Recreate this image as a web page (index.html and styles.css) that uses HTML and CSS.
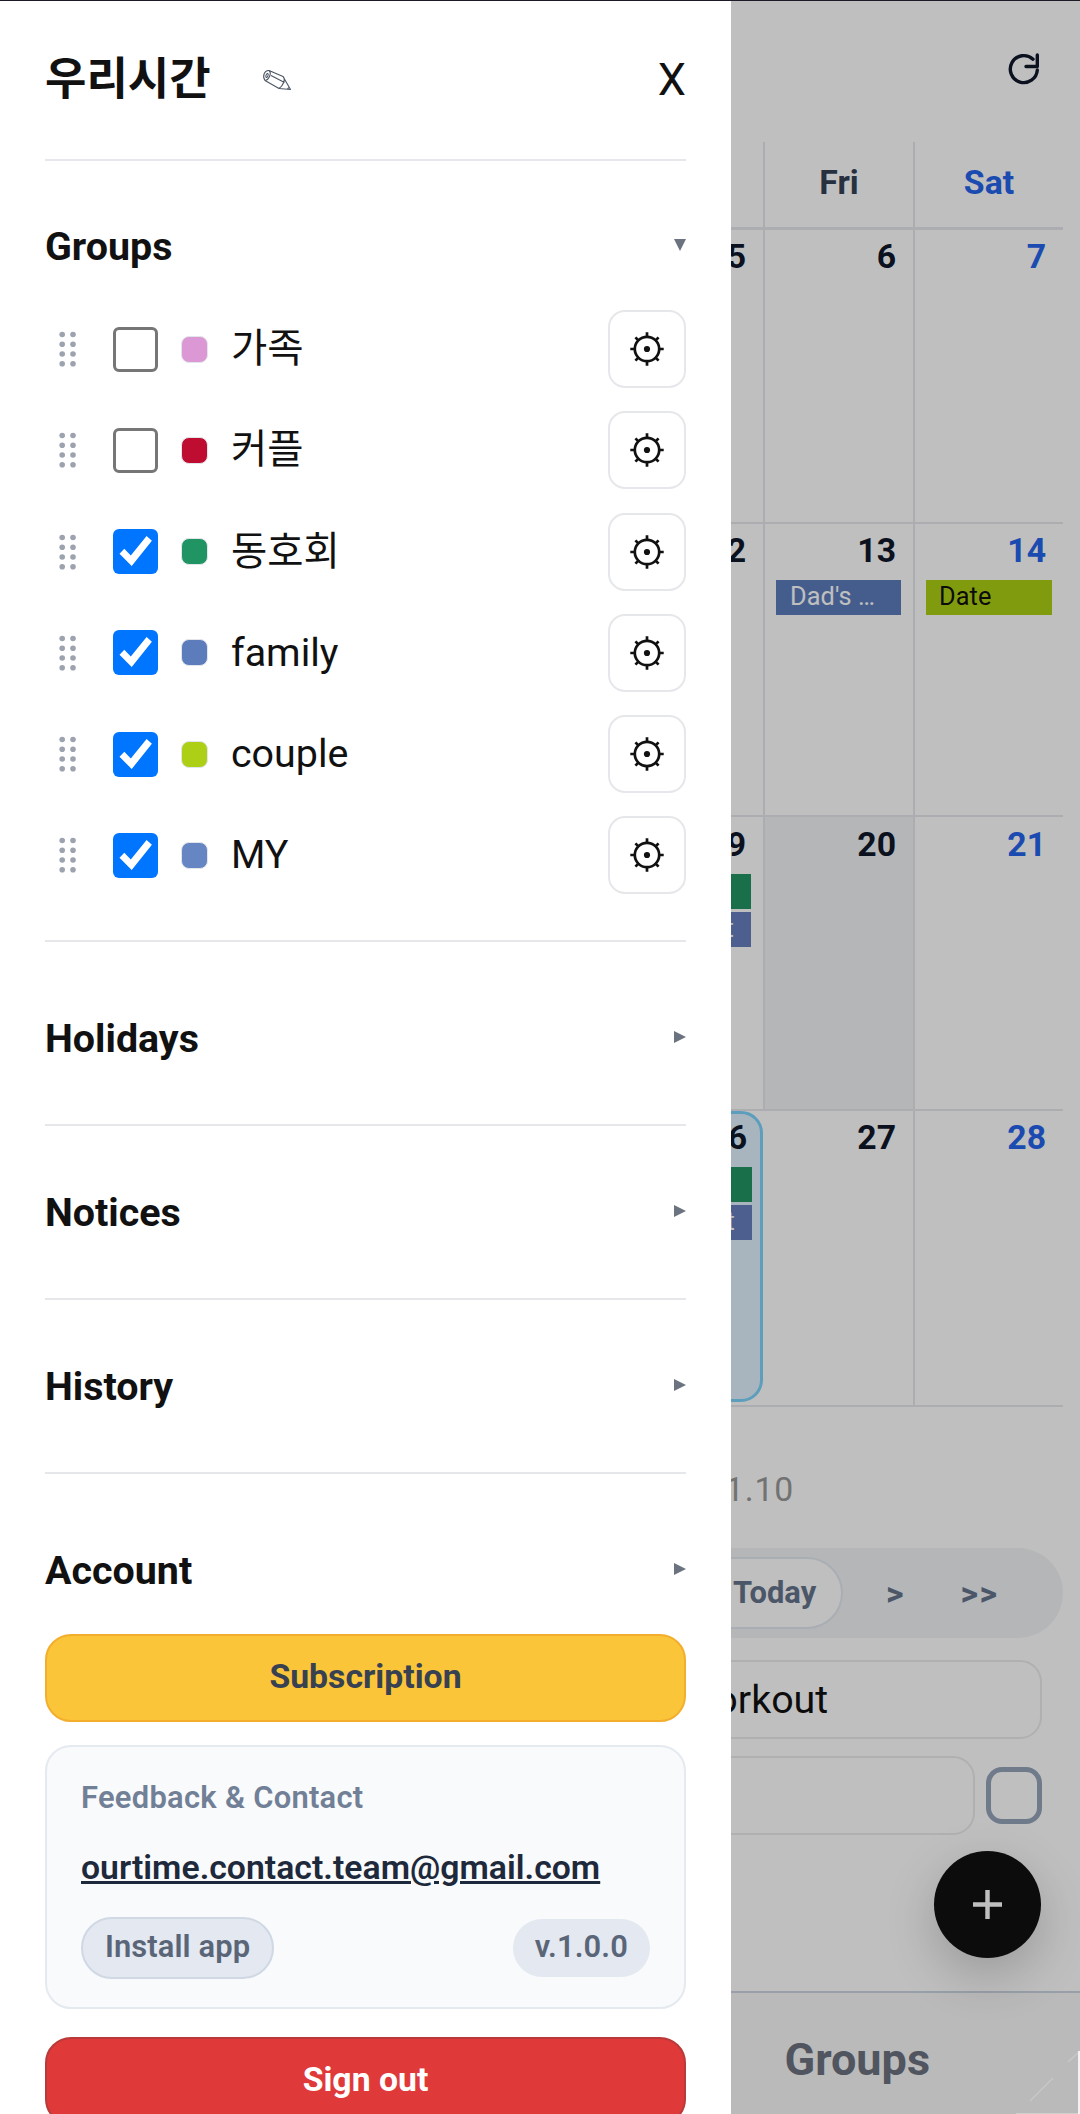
FILE: index.html
```html
<!DOCTYPE html>
<html lang="ko">
<head>
<meta charset="utf-8">
<title>우리시간</title>
<link rel="stylesheet" href="styles.css">
</head>
<body>
<svg class="defs" width="0" height="0" aria-hidden="true">
  <symbol id="gear" viewBox="0 0 34 34">
    <circle cx="17" cy="17" r="12.2" fill="none" stroke="#111" stroke-width="2.7"/>
    <circle cx="17" cy="17" r="3.1" fill="#111"/>
    <path d="M17 .3v5M17 28.700v5M.3 17h5M28.700 17h5M5.400 5.400l3.400 3.400M25.200 25.200l3.400 3.400M5.400 28.600l3.400-3.400M25.200 8.800l3.400-3.400" stroke="#111" stroke-width="2.7" fill="none"/>
  </symbol>
  <symbol id="grip" viewBox="0 0 18 36">
    <g fill="#9ca3af"><circle cx="3.200" cy="3.500" r="2.800"/><circle cx="14" cy="3.500" r="2.800"/><circle cx="3.200" cy="13.200" r="2.800"/><circle cx="14" cy="13.200" r="2.800"/><circle cx="3.200" cy="23" r="2.800"/><circle cx="14" cy="23" r="2.800"/><circle cx="3.200" cy="32.700" r="2.800"/><circle cx="14" cy="32.700" r="2.800"/></g>
  </symbol>
  <symbol id="tick" viewBox="0 0 45 45">
    <path d="M6.500 24.800l4.800-5 6.500 6.700L33.600 7l5.300 4.700L18.700 37z" fill="#fff"/>
  </symbol>
</svg>

<main class="app">
  <header class="topbar">
    <svg class="refresh" viewBox="0 0 32 32" fill="none" stroke="#0f172a" stroke-width="3.400" stroke-linecap="round" stroke-linejoin="round"><path d="M29.300 17A13.500 13.500 0 1 1 25 6.200"/><path d="M29.300 2v11.500H18"/></svg>
  </header>
  <section class="calendar">
    <div class="head"></div><div class="head">Fri</div><div class="head sat">Sat</div>
    <div class="day"><b>5</b></div>
    <div class="day"><b>6</b></div>
    <div class="day sat"><b>7</b></div>
    <div class="day"><b>12</b></div>
    <div class="day"><b>13</b><span class="event blue">Dad's …</span></div>
    <div class="day sat"><b>14</b><span class="event lime">Date</span></div>
    <div class="day"><b>19</b><span class="event green"></span><span class="event indigo end">t</span></div>
    <div class="day today"><b>20</b></div>
    <div class="day sat"><b>21</b></div>
    <div class="day selected"><b>26</b><span class="event green"></span><span class="event indigo end">t</span></div>
    <div class="day"><b>27</b></div>
    <div class="day sat"><b>28</b></div>
  </section>
  <p class="lunar">1.10</p>
  <nav class="pager"><span class="now">Today</span><span class="next">&gt;</span><span class="last">&gt;&gt;</span></nav>
  <section class="agenda">
    <div class="item">Workout</div>
    <div class="todo"><div class="item"></div><i class="box"></i></div>
  </section>
  <footer class="tabs"><span>Groups</span></footer>
  <div class="fab"><svg viewBox="0 0 30 30"><path d="M15 0v30M0 15h30" stroke="#fff" stroke-width="4.600"/></svg></div>
</main>
<div class="scrim"></div>
<svg class="corner" viewBox="0 0 80 80" fill="none"><path d="M30 67L53 44M68 28l12-11" stroke="#fff" stroke-opacity=".2" stroke-width="1.500"/><path d="M79 17v63" stroke="#f2f2f2" stroke-width="2"/><path d="M16 79.500h64" stroke="#fff" stroke-opacity=".3"/></svg>

<aside class="drawer">
  <header class="brand">
    <h1>우리시간</h1>
    <svg class="pencil" viewBox="0 0 30 24" fill="none" stroke="#4b5563" stroke-width="1.100" stroke-linejoin="round"><path d="M7 1.500L21 7.500L28.500 20.500L17 19.500L3 11.500C0 7 2.500 1 7 1.500ZM7 1.500C10 4 7 11 3 11.500M9 6.500L22.500 13.500M21 7.500C24 10 21 17 17 19.500M25.500 20l2-2"/><ellipse cx="5" cy="6.500" rx="1" ry="2" transform="rotate(20 5 6.500)"/></svg>
    <span class="close">X</span>
  </header>
  <section class="groups">
    <h2>Groups<svg class="caret" viewBox="0 0 12 12"><path d="M0 0h12L6 12z"/></svg></h2>
    <ul>
      <li><svg class="grip"><use href="#grip"/></svg><i class="check"></i><i class="swatch pink"></i><span>가족</span><button><svg><use href="#gear"/></svg></button></li>
      <li><svg class="grip"><use href="#grip"/></svg><i class="check"></i><i class="swatch red"></i><span>커플</span><button><svg><use href="#gear"/></svg></button></li>
      <li><svg class="grip"><use href="#grip"/></svg><i class="check on"><svg><use href="#tick"/></svg></i><i class="swatch green"></i><span>동호회</span><button><svg><use href="#gear"/></svg></button></li>
      <li><svg class="grip"><use href="#grip"/></svg><i class="check on"><svg><use href="#tick"/></svg></i><i class="swatch blue"></i><span>family</span><button><svg><use href="#gear"/></svg></button></li>
      <li><svg class="grip"><use href="#grip"/></svg><i class="check on"><svg><use href="#tick"/></svg></i><i class="swatch lime"></i><span>couple</span><button><svg><use href="#gear"/></svg></button></li>
      <li><svg class="grip"><use href="#grip"/></svg><i class="check on"><svg><use href="#tick"/></svg></i><i class="swatch steel"></i><span>MY</span><button><svg><use href="#gear"/></svg></button></li>
    </ul>
  </section>
  <section class="fold first"><h2>Holidays<svg class="caret" viewBox="0 0 12 12"><path d="M0 0v12L12 6z"/></svg></h2></section>
  <section class="fold"><h2>Notices<svg class="caret" viewBox="0 0 12 12"><path d="M0 0v12L12 6z"/></svg></h2></section>
  <section class="fold"><h2>History<svg class="caret" viewBox="0 0 12 12"><path d="M0 0v12L12 6z"/></svg></h2></section>
  <section class="account">
    <h2>Account<svg class="caret" viewBox="0 0 12 12"><path d="M0 0v12L12 6z"/></svg></h2>
    <div class="wide subscribe">Subscription</div>
    <div class="contact">
      <p>Feedback &amp; Contact</p>
      <a>ourtime.contact.team@gmail.com</a>
      <div class="meta"><span class="pill install">Install app</span><span class="pill">v.1.0.0</span></div>
    </div>
    <div class="wide signout">Sign out</div>
  </section>
</aside>
</body>
</html>
```
FILE: styles.css
```css
* { box-sizing: border-box; margin: 0; padding: 0; }
body { position: relative; width: 1080px; height: 2114px; overflow: hidden; background: #fff; color: #111; font-family: Roboto, "Noto Sans CJK KR", sans-serif; }
i { font-style: normal; }
ul { list-style: none; }
svg { display: block; }
.defs { position: absolute; }

/* calendar page */
.app { display: flex; flex-direction: column; align-items: flex-end; height: 2114px; border-top: 1px solid #1c1a26; }
.topbar { height: 141px; padding: 52px 40px 0 0; }
.refresh { width: 32px; height: 32px; }
.calendar { display: grid; grid-template-columns: 150px 150px 148px; grid-template-rows: 88px 294px 293px 294px 294px; margin-right: 17px; border-bottom: 2px solid #e5e7eb; color: #0f172a; }
.head { border-right: 2px solid #e5e7eb; border-bottom: 3px solid #e5e7eb; text-align: center; font: 700 33.750px/82px Roboto; color: #334155; }
.day { display: flex; flex-direction: column; gap: 3px; border-right: 2px solid #e5e7eb; border-bottom: 2px solid #e5e7eb; padding: 7px 12px 0 11px; }
.day b { font: 700 33.750px/40px Roboto; text-align: right; padding-right: 5px; margin-bottom: 6px; }
.day.sat { padding-right: 11px; }
.day.sat b { padding-right: 6px; }
.day:nth-child(n+13) { border-bottom: 0; }
.day:nth-child(n+10) { padding-top: 8px; }
.day:nth-child(n+13) { padding-top: 7px; }
.sat.head, .sat.day { border-right: 0; color: #2563eb; }
.event { display: block; flex: none; height: 35px; padding-left: 14px; font: 400 25.300px/33px Roboto; letter-spacing: .1px; color: #fff; white-space: nowrap; overflow: hidden; }
.event.end { text-align: right; padding-right: 17px; }
.blue { background: #5c7cbb; }
.indigo { background: #667fbf; }
.green { background: #209563; }
.lime { background: #adcf15; }
.event.lime { color: #111; padding-left: 13px; }
.today { background: #f1f3f6; }
.day.selected { background: #e0f2fe; border: 3px solid #7dd3fc; border-radius: 22px; margin: 0 2px 3px 0; padding-top: 4px; padding-right: 8px; }
.lunar { margin: 61px 286px 0 0; font-size: 33.750px; line-height: 44px; color: #999; letter-spacing: .8px; }
.pager { display: flex; align-items: center; width: 400px; height: 90px; margin: 36px 17px 0 0; border-radius: 45px; background: #f1f3f6; color: #64748b; font: 700 30.900px/67px Roboto; }
.now { width: 180px; height: 72px; padding-left: 68px; border: 2px solid #e2e8f0; border-radius: 36px; background: #fff; }
.next { margin-left: 43px; font-size: 34px; }
.last { margin-left: 57px; font-size: 34px; letter-spacing: 1.500px; }
.agenda { display: flex; flex-direction: column; gap: 17px; width: 390px; margin: 22px 38px 0 0; }
.item { height: 79px; flex: 1 0 79px; padding-left: 27px; border: 2px solid #ebebeb; border-radius: 22px; font-size: 39.400px; line-height: 75px; color: #111; }
.todo { display: flex; align-items: center; gap: 11px; }
.box { width: 56px; height: 57px; border: 5px solid #94a3b8; border-radius: 16px; }
.fab { position: absolute; left: 934px; top: 1851px; display: flex; align-items: center; justify-content: center; width: 107px; height: 107px; border-radius: 50%; background: #111; box-shadow: 0 17px 51px rgba(0,0,0,.2); }
.fab svg { width: 29px; height: 29px; }
.tabs { width: 1080px; height: 123px; margin-top: auto; border-top: 2px solid #cbd5e1; background: #f8f8f8; color: #6b7280; font: 700 45px/134px Roboto; text-align: right; padding-right: 150px; }
.scrim { position: absolute; inset: 1px 0 0; background: rgba(0,0,0,.25); }
.corner { position: absolute; right: 0; bottom: 0; width: 80px; height: 80px; }

/* side drawer */
.drawer { position: absolute; inset: 0 auto 0 0; width: 731px; padding: 0 45px; background: #fff; border-top: 1px solid #1c1a26; overflow: hidden; }
.brand { display: flex; align-items: center; height: 160px; padding-bottom: 2px; border-bottom: 2px solid #e5e7eb; }
h1 { margin-top: 2px; font: 700 45px/66px Roboto, "Noto Sans CJK KR", sans-serif; }
.pencil { width: 30px; height: 24px; margin: 4px 0 0 51px; }
.close { margin-left: auto; font-size: 45px; }
h2 { display: flex; align-items: center; justify-content: space-between; font: 700 39.400px/50px Roboto; }
.caret { width: 12px; height: 12px; margin-bottom: 4px; fill: #6b7280; }
.groups { padding: 61px 0 46px; border-bottom: 2px solid #e5e7eb; }
ul { display: flex; flex-direction: column; gap: 23.250px; margin-top: 38px; }
li { display: flex; align-items: center; height: 78px; padding-left: 14px; }
.grip { width: 18px; height: 36px; }
.check { width: 45px; height: 45px; margin-left: 36px; border: 3px solid #767676; border-radius: 6px; }
.check.on { border: 0; background: #0075ff; }
.check svg { width: 45px; height: 45px; }
.swatch { width: 27px; height: 27px; margin: 0 23.500px 0 22.500px; border: 1.500px solid #e2e5ea; border-radius: 8px; }
.pink { background: #dc98d5; }
.red { background: #bf0d32; }
.steel { background: #6685c3; }
li span { font-size: 39.400px; line-height: 56px; }
button { display: flex; align-items: center; justify-content: center; width: 78px; height: 78px; margin-left: auto; border: 2px solid #e5e7eb; border-radius: 17px; background: #fff; }
button svg { width: 34px; height: 34px; }
.fold { height: 174px; padding-top: 62px; border-bottom: 2px solid #e5e7eb; }
.fold.first { height: 184px; padding-top: 72px; }
.account { padding-top: 72px; }
.wide { height: 88px; border-radius: 26px; text-align: center; font: 700 33.750px/82px Roboto; }
.subscribe { margin-top: 38px; background: #fbc53a; border: 2px solid #f3ae2d; color: #374151; }
.contact { height: 264px; margin: 23px 0 28px; padding: 29px 34px; border: 2px solid #e5e9f0; border-radius: 26px; background: #f8fafc; }
.contact p { font: 600 30.900px/44px Roboto; letter-spacing: .28px; color: #718096; }
.contact a { display: block; margin-top: 26px; font: 600 33.750px/44px Roboto; letter-spacing: .02px; color: #1e293b; text-decoration: underline; }
.meta { display: flex; justify-content: space-between; align-items: center; margin-top: 27px; }
.pill { height: 58px; padding: 0 22px; border-radius: 31px; background: #e3e8f1; font: 600 30.900px/56px Roboto; letter-spacing: .1px; color: #5a6678; }
.install { height: 62px; border: 2px solid #cfd8e3; }
.signout { background: #e03939; border: 2px solid #b83a3a; color: #fff; }
```
